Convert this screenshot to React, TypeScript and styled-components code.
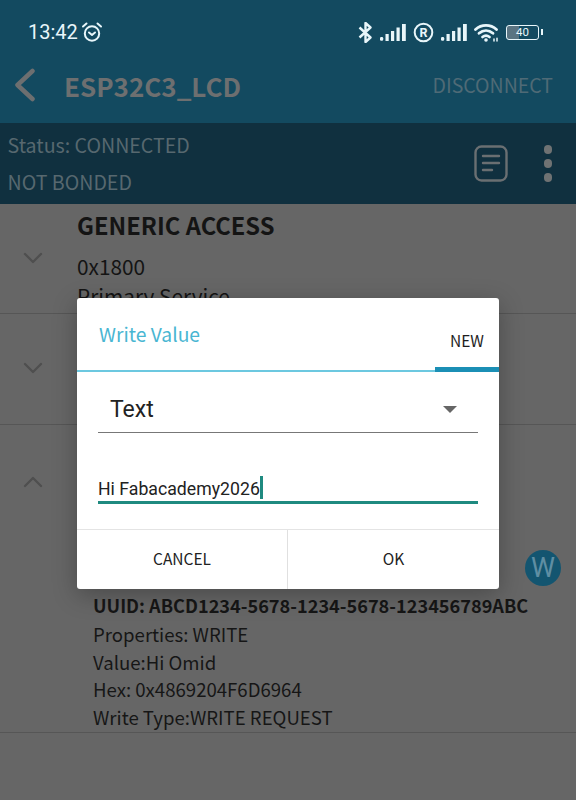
import React from "react";
import styled, { createGlobalStyle } from "styled-components";

const SANS = `"Noto Sans CJK SC", "Noto Sans", sans-serif`;
const ROBOTO = `Roboto, "Liberation Sans", sans-serif`;

const Global = createGlobalStyle`
  html, body { margin: 0; padding: 0; background: #666; }
  * { box-sizing: border-box; }
`;

const Page = styled.div`
  position: relative;
  width: 576px;
  height: 800px;
  overflow: hidden;
  background: #666666;
  font-family: ${SANS};
`;

const Header = styled.header`
  height: 123px;
  background: #134a60;
  display: flex;
  flex-direction: column;
`;

const StatusBar = styled.div`
  height: 58px;
  padding: 6px 37px 0 28px;
  display: flex;
  align-items: center;
  justify-content: space-between;
  color: #e8f6fa;
`;

const StatusGroup = styled.div`
  display: flex;
  align-items: center;
  gap: 7px;
`;

const ClockGroup = styled(StatusGroup)`
  gap: 3px;
`;

const Clock = styled.span`
  font: 400 20px ${ROBOTO};
`;

const Battery = styled.div`
  position: relative;
  width: 33px;
  height: 15px;
  border: 1.5px solid #e8f6fa;
  border-radius: 3px;
  font: 400 11.5px/12px ${ROBOTO};
  text-align: center;
  color: #e8f6fa;
  background: linear-gradient(90deg, #5a7482 40%, transparent 40%);

  &::after {
    content: "";
    position: absolute;
    right: -5px;
    top: 3px;
    width: 2px;
    height: 6px;
    background: #e8f6fa;
  }
`;

const AppBar = styled.div`
  flex: 1;
  display: flex;
  align-items: center;
  padding: 0 23px 11px 14px;
`;

const Title = styled.h1`
  flex: 1;
  margin: 0 0 0 26px;
  font: 700 26px ${SANS};
  color: #6d6f70;
`;

const Disconnect = styled.span`
  padding-bottom: 2px;
  font-size: 19.5px;
  color: #4f6a76;
`;

const StatusPanel = styled.section`
  height: 81px;
  background: #10303f;
  display: flex;
  align-items: center;
  justify-content: space-between;
  padding: 0 24px 0 7.5px;
`;

const StatusLines = styled.div`
  display: flex;
  flex-direction: column;
  gap: 9px;
  font-size: 19.6px;
  line-height: 28px;
  color: #57686f;
`;

const StatusActions = styled.div`
  display: flex;
  align-items: center;
  gap: 36px;
`;

const Dots = styled.div`
  display: flex;
  flex-direction: column;
  gap: 5.5px;
`;

const Dot = styled.span`
  width: 8.5px;
  height: 8.5px;
  border-radius: 50%;
  background: #6f7273;
`;

const ServiceRow = styled.section<{ $height: number }>`
  position: relative;
  height: ${(p) => p.$height}px;
  border-bottom: 1.5px solid #565656;
  display: flex;
  overflow: hidden;
`;

const Chevron = styled.div<{ $top: number }>`
  width: 77px;
  padding: ${(p) => p.$top}px 0 0 23px;
  flex-shrink: 0;
`;

const ServiceBody = styled.div`
  flex: 1;
  color: #141414;
`;

const ServiceName = styled.h2`
  margin: 3px 0 0;
  font: 700 23.7px/36px ${SANS};
`;

const ServiceId = styled.div`
  font-size: 20.8px;
  line-height: 30px;
  margin-top: 8px;
`;

const ServiceType = styled.div`
  font-size: 20.8px;
  line-height: 30px;
`;

const CharacteristicDetails = styled.div`
  margin: 167px 0 0 16px;
  color: #161616;
  font-size: 18.6px;
  line-height: 27.8px;
`;

const Uuid = styled.div`
  font-weight: 700;
  font-size: 18.15px;
`;

const WriteBadge = styled.div`
  position: absolute;
  left: 525px;
  top: 125px;
  width: 36px;
  height: 36px;
  border-radius: 50%;
  background: #135570;
  color: #5f8ea3;
  font: 400 27px/36px ${ROBOTO};
  text-align: center;
`;

const Dialog = styled.div`
  position: absolute;
  left: 77px;
  top: 298px;
  width: 422px;
  height: 291px;
  background: #fff;
  border-radius: 3px;
  box-shadow: 0 6px 24px rgba(0, 0, 0, 0.28);
  display: flex;
  flex-direction: column;
`;

const DialogHead = styled.div`
  height: 74px;
  border-bottom: 2px solid #6cc8e0;
  display: flex;
  justify-content: space-between;
`;

const DialogTitle = styled.div`
  padding: 21px 0 0 22px;
  font-size: 19.3px;
  line-height: 30px;
  color: #49b6d2;
`;

const Tab = styled.div`
  width: 64px;
  height: 74px;
  padding-top: 30px;
  border-bottom: 5px solid #1b8fb5;
  font-size: 15.5px;
  line-height: 24px;
  text-align: center;
  color: #1e1e1e;
`;

const DialogBody = styled.div`
  flex: 1;
  padding: 0 21px;
`;

const Select = styled.div`
  height: 61px;
  padding: 14px 21px 0 12px;
  border-bottom: 1.5px solid #777;
  display: flex;
  align-items: center;
  justify-content: space-between;
  font: 400 23px ${ROBOTO};
  color: #222;
`;

const Caret = styled.span`
  width: 0;
  height: 0;
  margin-top: 1px;
  border-left: 7.5px solid transparent;
  border-right: 7.5px solid transparent;
  border-top: 7.5px solid #666;
`;

const TextInput = styled.div`
  margin-top: 38px;
  height: 33px;
  padding-top: 5px;
  border-bottom: 3.5px solid #1f8a80;
  font: 400 17.7px/24px ${ROBOTO};
  color: #222;
  display: flex;
  align-items: center;
`;

const Cursor = styled.span`
  width: 3px;
  height: 23px;
  margin: 0 0 3px 0.5px;
  background: #1f8a80;
`;

const DialogFooter = styled.div`
  height: 60px;
  border-top: 1px solid #e4e4e4;
  display: flex;
`;

const DialogButton = styled.div<{ $divided?: boolean }>`
  flex: 1;
  padding-bottom: 3px;
  display: flex;
  align-items: center;
  justify-content: center;
  font-size: 15.5px;
  color: #222;
  border-right: ${(p) => (p.$divided ? "1px solid #e0e0e0" : "none")};
`;

const CancelButton = styled(DialogButton)`
  flex: 0 0 211px;
`;

const AlarmIcon = () => (
  <svg width="22" height="22" viewBox="0 0 22 22" fill="none" stroke="#e8f6fa" strokeWidth="2" strokeLinecap="round" strokeLinejoin="round">
    <circle cx="11" cy="12.5" r="7.2" />
    <path d="M8 11.500l3 2.500 3-2.500" />
    <path d="M2 5.500 5.500 2.500M20 5.500 16.500 2.500" />
  </svg>
);

const BluetoothIcon = () => (
  <svg width="15" height="21" viewBox="0 0 15 21" fill="none" stroke="#e8f6fa" strokeWidth="2.400" strokeLinejoin="round">
    <path d="M1.500 5.500l11 10-5 4.500V1l5 4.500-11 10" />
  </svg>
);

const SignalIcon = () => (
  <svg width="26" height="17" viewBox="0 0 26 17" fill="#e8f6fa">
    <rect x="0" y="13" width="3.200" height="3.800" rx="1.200" />
    <rect x="5.500" y="10" width="3.200" height="7" />
    <rect x="11" y="7" width="3.200" height="10" />
    <rect x="16.500" y="3.500" width="3.200" height="13.500" />
    <rect x="22" y="0" width="3.800" height="17" />
  </svg>
);

const RegisteredIcon = () => (
  <svg width="21" height="21" viewBox="0 0 21 21">
    <circle cx="10.500" cy="10.500" r="8.800" fill="none" stroke="#e8f6fa" strokeWidth="2" />
    <text x="10.500" y="15" fontSize="12.500" fontWeight="700" fontFamily="Roboto, sans-serif" fill="#e8f6fa" textAnchor="middle">R</text>
  </svg>
);

const WifiIcon = () => (
  <svg width="25" height="19" viewBox="0 0 25 19" fill="none" stroke="#e8f6fa" strokeWidth="2.800" strokeLinecap="round">
    <path d="M1.500 6.500C7.500 1 16.500 1 22.500 6.500" />
    <path d="M5 10.300c4.300-3.700 9.700-3.700 14 0" />
    <path d="M8.500 14c2.400-1.900 4.600-1.900 7 0" />
    <circle cx="12" cy="17" r="1.800" fill="#e8f6fa" stroke="none" />
    <path d="M20 18v-2M23 18v-2.800" strokeWidth="1.500" />
  </svg>
);

const BackIcon = () => (
  <svg width="24" height="34" viewBox="0 0 24 34" fill="none" stroke="#6d6f70" strokeWidth="4.500" strokeLinecap="round" strokeLinejoin="round">
    <path d="M18.500 3 3.500 17l15 14" />
  </svg>
);

const LogIcon = () => (
  <svg width="34" height="37" viewBox="0 0 34 37" fill="none" stroke="#6a6f72" strokeWidth="2.400" strokeLinecap="round">
    <rect x="1.500" y="1.500" width="31" height="34" rx="6" />
    <path d="M9 11h16M9 18h16M9 25h9" />
  </svg>
);

const ChevronIcon = ({ up }: { up?: boolean }) => (
  <svg width="20" height="12" viewBox="0 0 20 12" fill="none" stroke="#4f4f4f" strokeWidth="2.400" strokeLinecap="round" strokeLinejoin="round">
    <path d={up ? "M2 10l8-8 8 8" : "M2 2l8 8 8-8"} />
  </svg>
);

export default function App() {
  return (
    <Page>
      <Global />
      <Header>
        <StatusBar>
          <ClockGroup>
            <Clock>13:42</Clock>
            <AlarmIcon />
          </ClockGroup>
          <StatusGroup>
            <BluetoothIcon />
            <SignalIcon />
            <RegisteredIcon />
            <SignalIcon />
            <WifiIcon />
            <Battery>40</Battery>
          </StatusGroup>
        </StatusBar>
        <AppBar>
          <BackIcon />
          <Title>ESP32C3_LCD</Title>
          <Disconnect>DISCONNECT</Disconnect>
        </AppBar>
      </Header>
      <StatusPanel>
        <StatusLines>
          <span>Status: CONNECTED</span>
          <span>NOT BONDED</span>
        </StatusLines>
        <StatusActions>
          <LogIcon />
          <Dots>
            <Dot />
            <Dot />
            <Dot />
          </Dots>
        </StatusActions>
      </StatusPanel>

      <ServiceRow $height={110}>
        <Chevron $top={41}>
          <ChevronIcon />
        </Chevron>
        <ServiceBody>
          <ServiceName>GENERIC ACCESS</ServiceName>
          <ServiceId>0x1800</ServiceId>
          <ServiceType>Primary Service</ServiceType>
        </ServiceBody>
      </ServiceRow>
      <ServiceRow $height={111}>
        <Chevron $top={41}>
          <ChevronIcon />
        </Chevron>
      </ServiceRow>
      <ServiceRow $height={308}>
        <Chevron $top={44}>
          <ChevronIcon up />
        </Chevron>
        <ServiceBody>
          <CharacteristicDetails>
            <Uuid>UUID: ABCD1234-5678-1234-5678-123456789ABC</Uuid>
            <div>Properties: WRITE</div>
            <div>Value:Hi Omid</div>
            <div>Hex: 0x4869204F6D6964</div>
            <div>Write Type:WRITE REQUEST</div>
          </CharacteristicDetails>
        </ServiceBody>
        <WriteBadge>W</WriteBadge>
      </ServiceRow>

      <Dialog>
        <DialogHead>
          <DialogTitle>Write Value</DialogTitle>
          <Tab>NEW</Tab>
        </DialogHead>
        <DialogBody>
          <Select>
            Text
            <Caret />
          </Select>
          <TextInput>
            Hi Fabacademy2026
            <Cursor />
          </TextInput>
        </DialogBody>
        <DialogFooter>
          <CancelButton $divided>CANCEL</CancelButton>
          <DialogButton>OK</DialogButton>
        </DialogFooter>
      </Dialog>
    </Page>
  );
}
